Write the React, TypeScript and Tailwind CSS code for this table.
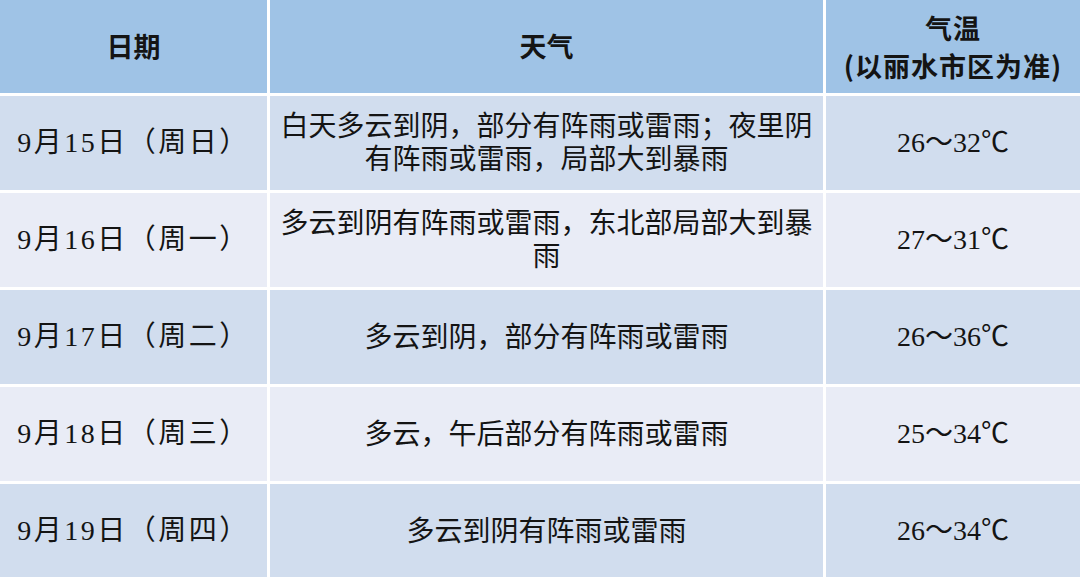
import React from "react";

const rows = [
  { date: "9月15日（周日）", weather: "白天多云到阴，部分有阵雨或雷雨；夜里阴有阵雨或雷雨，局部大到暴雨", temp: "26～32℃" },
  { date: "9月16日（周一）", weather: "多云到阴有阵雨或雷雨，东北部局部大到暴雨", temp: "27～31℃" },
  { date: "9月17日（周二）", weather: "多云到阴，部分有阵雨或雷雨", temp: "26～36℃" },
  { date: "9月18日（周三）", weather: "多云，午后部分有阵雨或雷雨", temp: "25～34℃" },
  { date: "9月19日（周四）", weather: "多云到阴有阵雨或雷雨", temp: "26～34℃" },
];

export default function App() {
  return (
    <div className="w-[1080px] h-[577px] overflow-hidden bg-white">
      <div className="grid grid-cols-[267px_553px_254px] grid-rows-[93px_repeat(5,94px)] gap-[3px] text-[#141414]">
        <div className="bg-[#9fc3e6] flex items-center justify-center font-bold text-[27px] font-['Noto_Sans_CJK_SC','Liberation_Sans',sans-serif]">
          日期
        </div>
        <div className="bg-[#9fc3e6] flex items-center justify-center font-bold text-[27px] font-['Noto_Sans_CJK_SC','Liberation_Sans',sans-serif]">
          天气
        </div>
        <div className="bg-[#9fc3e6] flex flex-col items-center justify-center font-bold text-[27px] leading-[38px] tracking-[1px] font-['Noto_Sans_CJK_SC','Liberation_Sans',sans-serif]">
          <span>气温</span>
          <span>(以丽水市区为准)</span>
        </div>
        {rows.map((r, i) => {
          const bg = i % 2 === 0 ? "bg-[#d1ddee]" : "bg-[#e9ecf6]";
          return (
            <React.Fragment key={i}>
              <div className={`${bg} flex items-center justify-center text-[28px] tracking-[2.5px] font-['Liberation_Serif','Noto_Sans_CJK_SC',serif]`}>
                {r.date}
              </div>
              <div className={`${bg} flex items-center justify-center text-center text-[28px] leading-[33px] px-[8px] font-['Liberation_Serif','Noto_Sans_CJK_SC',serif]`}>
                {r.weather}
              </div>
              <div className={`${bg} flex items-center justify-center text-[28px] font-['Liberation_Serif','Noto_Sans_CJK_SC',serif]`}>
                {r.temp}
              </div>
            </React.Fragment>
          );
        })}
      </div>
    </div>
  );
}
